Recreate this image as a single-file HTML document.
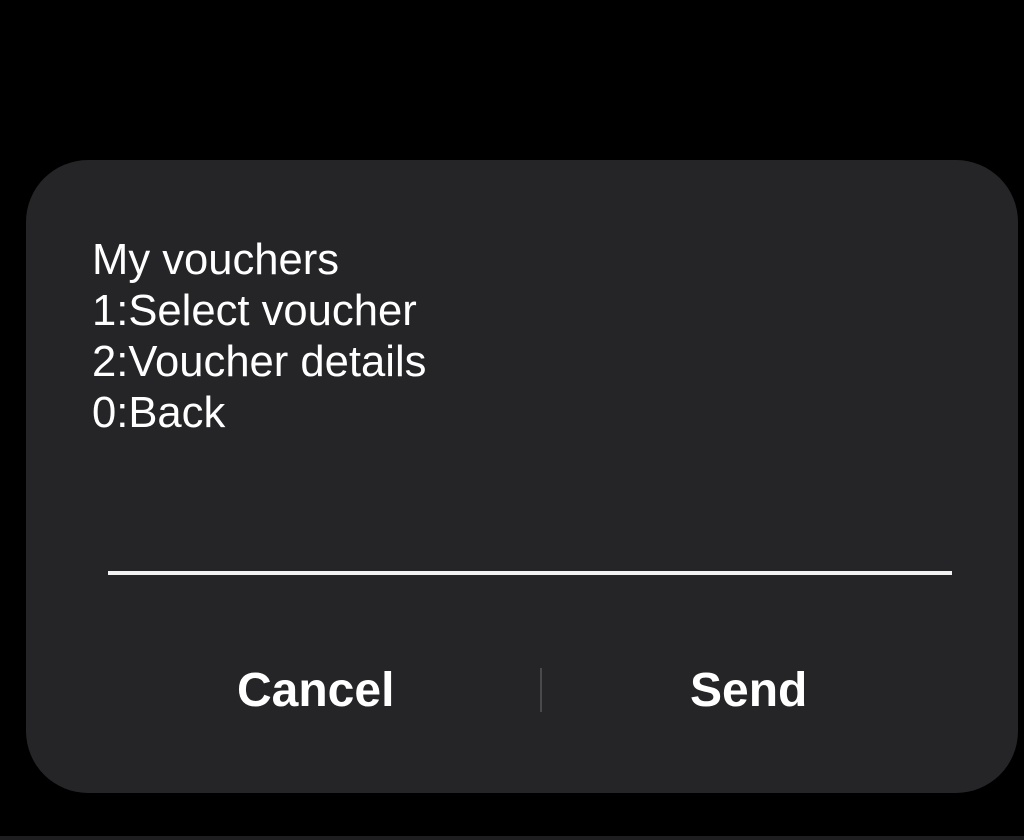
<!DOCTYPE html>
<html><head><style>
html,body{margin:0;padding:0;background:#000;width:1024px;height:840px;overflow:hidden;font-family:"Liberation Sans",sans-serif}
.d{position:absolute;left:26px;top:160px;width:992px;height:633px;background:#252528;border-radius:62px}
.t{position:absolute;left:92px;top:235px;color:#fff;font-size:43.6px;line-height:51px}
.ln{position:absolute;left:108px;top:571px;width:844px;height:4px;background:#f2f2f2}
.b{position:absolute;top:662px;color:#fff;font-weight:bold;font-size:48px;line-height:58px}
.dv{position:absolute;left:540px;top:668px;width:2px;height:44px;background:#4a4a4d}
.bt{position:absolute;left:0;top:836px;width:1024px;height:4px;background:#1e1e20}
</style></head><body>
<div class="d"></div>
<div class="t">My vouchers<br>1:Select voucher<br>2:Voucher details<br>0:Back</div>
<div class="ln"></div>
<div class="b" style="left:237px">Cancel</div>
<div class="dv"></div>
<div class="b" style="left:690px">Send</div>
<div class="bt"></div>
</body></html>
